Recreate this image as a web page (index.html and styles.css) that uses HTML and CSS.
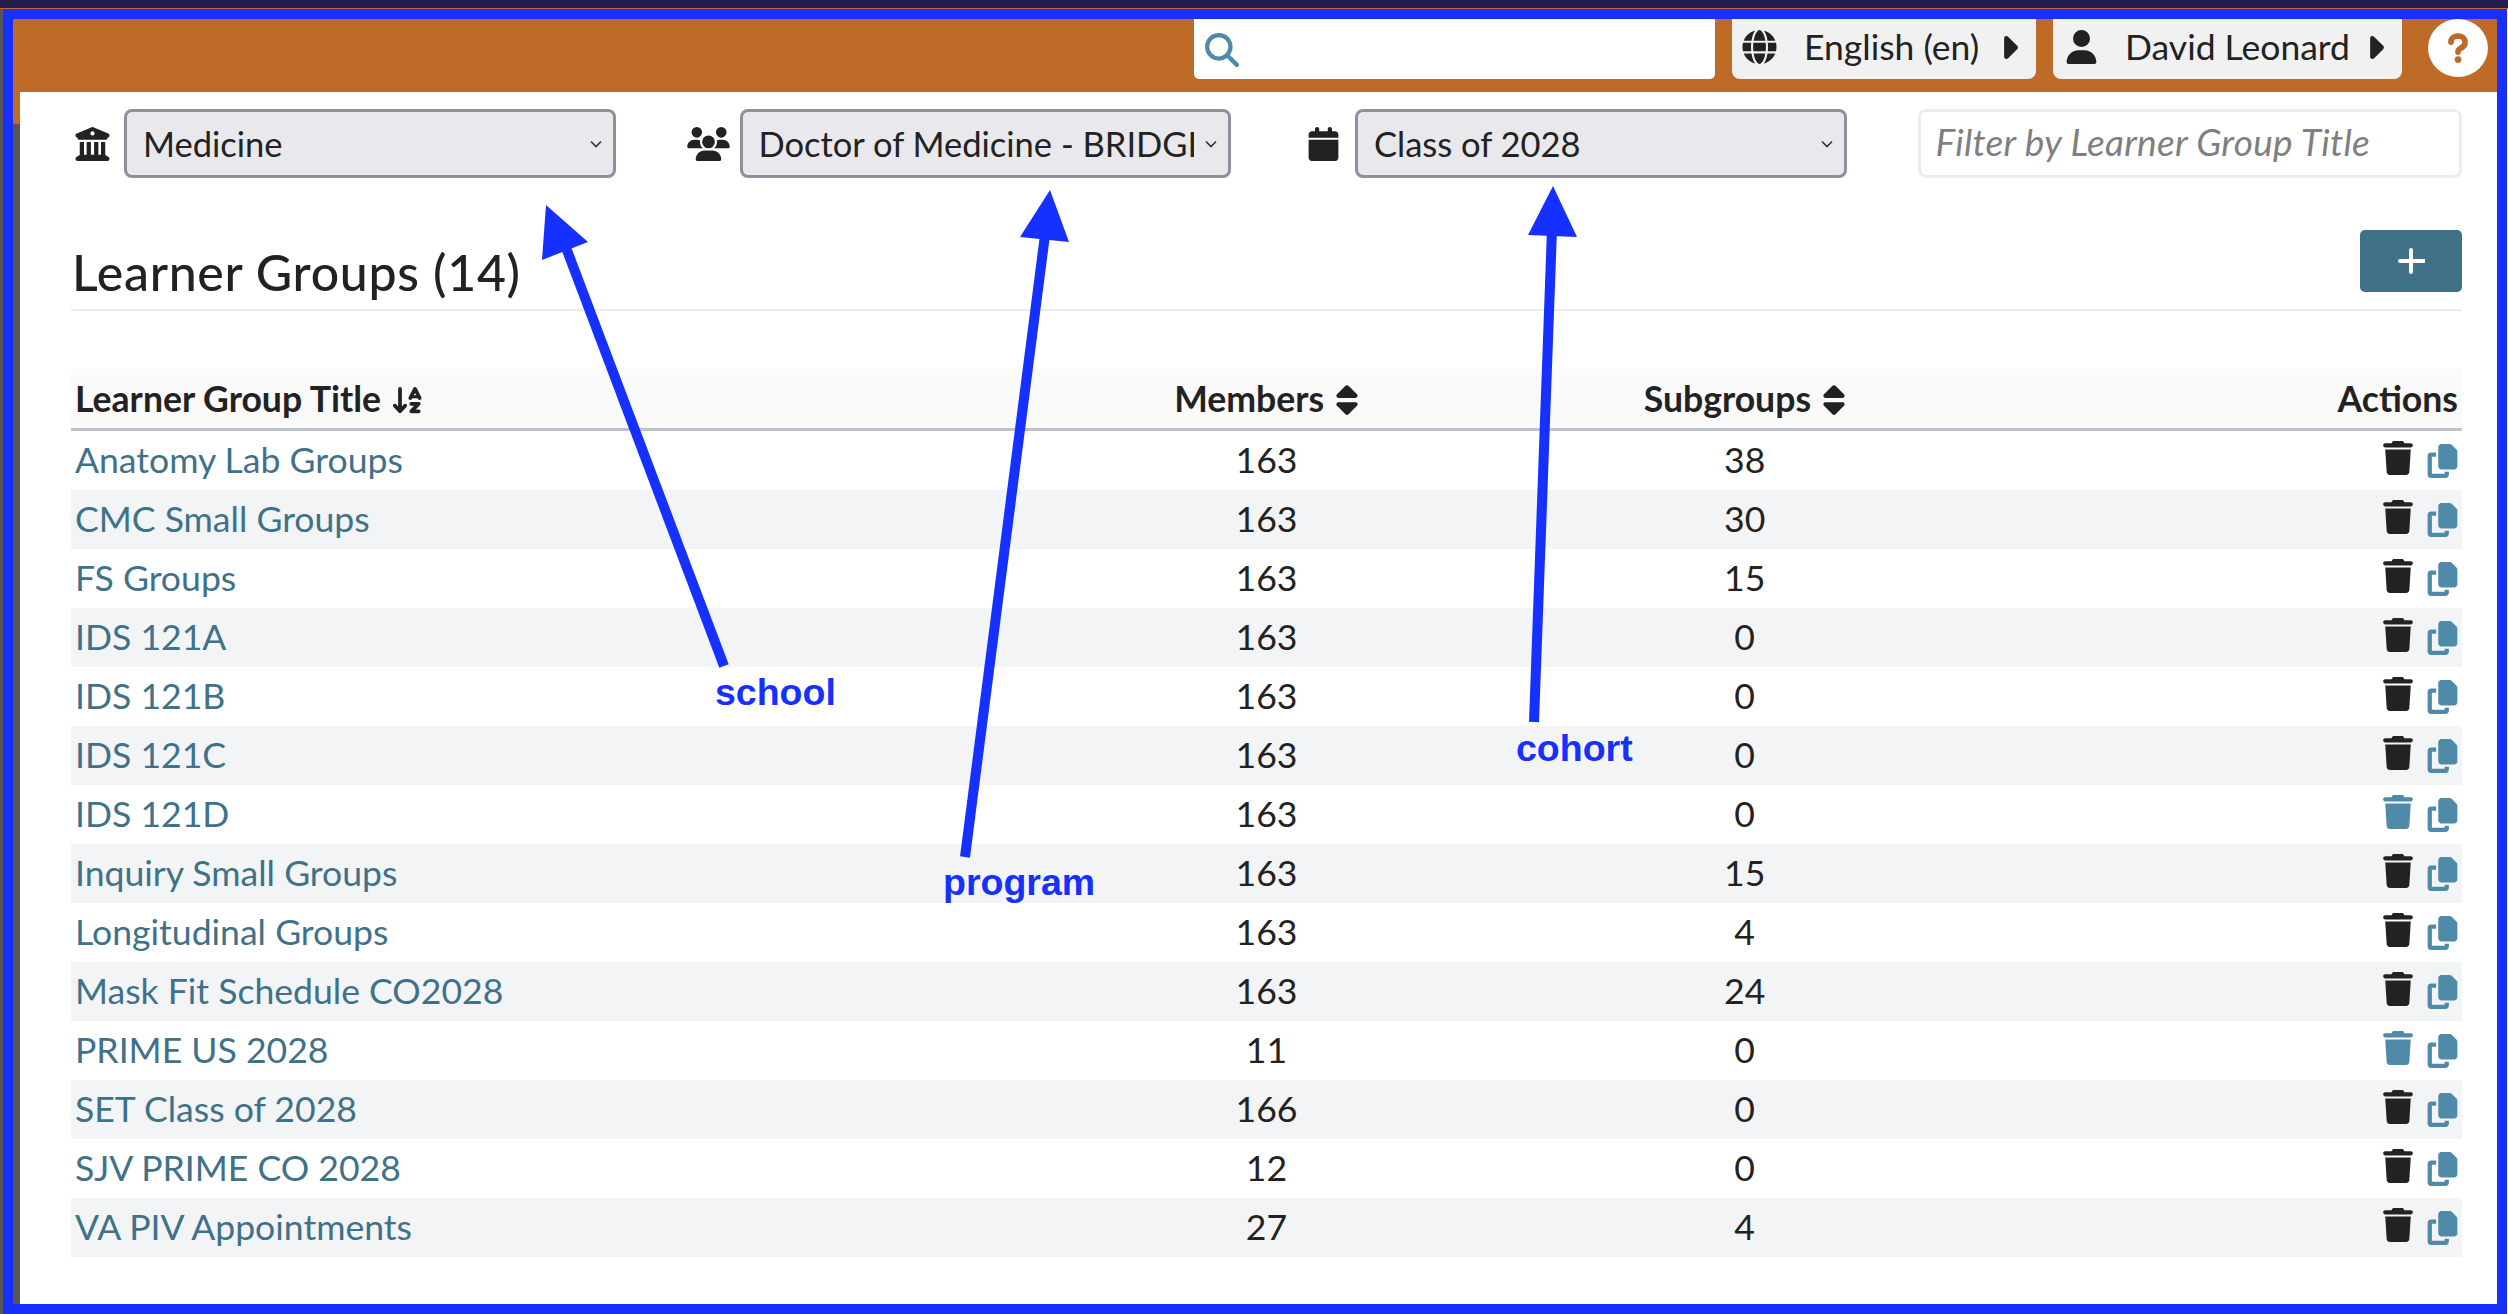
FILE: index.html
```html
<!DOCTYPE html>
<html lang="en">
<head>
<meta charset="utf-8">
<title>Learner Groups</title>
<link rel="stylesheet" href="styles.css">
</head>
<body>
<svg class="sprite" aria-hidden="true">
  <symbol id="i-bank" viewBox="0 0 512 512"><path d="M243.4 2.6l-224 96c-14 6-21.8 21-18.7 35.8S16.8 160 32 160v8c0 13.3 10.7 24 24 24H456c13.3 0 24-10.7 24-24v-8c15.2 0 28.3-10.7 31.3-25.6s-4.8-29.9-18.7-35.8l-224-96c-8-3.4-17.2-3.4-25.2 0zM128 224H64V420.3c-.6 .3-1.2 .7-1.8 1.1l-48 32c-11.7 7.8-17 22.4-12.9 35.9S17.9 512 32 512H480c14.1 0 26.5-9.2 30.6-22.7s-1.1-28.1-12.9-35.9l-48-32c-.6-.4-1.2-.7-1.8-1.1V224H384V416H344V224H280V416H232V224H168V416H128V224zM256 64a32 32 0 1 1 0 64 32 32 0 1 1 0-64z"/></symbol>
  <symbol id="i-users" viewBox="0 0 640 512"><path d="M144 0a80 80 0 1 1 0 160A80 80 0 1 1 144 0zM512 0a80 80 0 1 1 0 160A80 80 0 1 1 512 0zM0 298.700C0 239.800 47.800 192 106.700 192h42.700c15.900 0 31 3.500 44.600 9.700c-1.300 7.200-1.900 14.700-1.900 22.300c0 38.200 16.800 72.500 43.300 96c-.2 0-.4 0-.7 0H21.300C9.600 320 0 310.400 0 298.700zM405.300 320c-.2 0-.4 0-.7 0c26.600-23.500 43.300-57.800 43.300-96c0-7.600-.7-15-1.900-22.300c13.600-6.300 28.700-9.700 44.600-9.700h42.700C592.200 192 640 239.800 640 298.700c0 11.800-9.600 21.300-21.300 21.300H405.300zM224 224a96 96 0 1 1 192 0 96 96 0 1 1 -192 0zM128 485.300C128 411.700 187.700 352 261.300 352H378.700C452.300 352 512 411.700 512 485.300c0 14.700-11.900 26.700-26.700 26.700H154.700c-14.700 0-26.700-11.900-26.700-26.700z"/></symbol>
  <symbol id="i-cal" viewBox="0 0 448 512"><path d="M96 32V64H48C21.500 64 0 85.500 0 112v48H448V112c0-26.500-21.500-48-48-48H352V32c0-17.700-14.300-32-32-32s-32 14.300-32 32V64H160V32c0-17.700-14.300-32-32-32S96 14.300 96 32zM448 192H0V464c0 26.500 21.500 48 48 48H400c26.500 0 48-21.500 48-48V192z"/></symbol>
  <symbol id="i-globe" viewBox="0 0 512 512"><path d="M352 256c0 22.200-1.200 43.600-3.300 64H163.300c-2.200-20.400-3.300-41.800-3.300-64s1.200-43.600 3.300-64H348.700c2.200 20.400 3.300 41.800 3.300 64zm28.800-64H503.900c5.300 20.500 8.100 41.900 8.100 64s-2.800 43.500-8.100 64H380.800c2.100-20.600 3.200-42 3.200-64s-1.100-43.400-3.200-64zm112.600-32H376.700c-10-63.900-29.800-117.400-55.300-151.600c78.300 20.700 142 77.500 171.900 151.600zm-149.100 0H167.700c6.100-36.400 15.500-68.600 27-94.700c10.500-23.600 22.200-40.700 33.500-51.500C239.400 3.200 248.700 0 256 0s16.600 3.200 27.800 13.800c11.300 10.800 23 27.900 33.500 51.500c11.600 26 20.900 58.200 27 94.700zm-209 0H18.600C48.600 85.900 112.200 29.100 190.600 8.400C165.100 42.600 145.300 96.100 135.300 160zM8.100 192H131.200c-2.100 20.600-3.200 42-3.200 64s1.100 43.400 3.200 64H8.100C2.800 299.500 0 278.100 0 256s2.800-43.500 8.100-64zM194.700 446.600c-11.600-26-20.900-58.200-27-94.600H344.300c-6.100 36.400-15.500 68.600-27 94.600c-10.500 23.600-22.200 40.700-33.500 51.500C272.600 508.800 263.300 512 256 512s-16.600-3.200-27.800-13.800c-11.300-10.800-23-27.900-33.500-51.500zM135.300 352c10 63.900 29.800 117.400 55.300 151.600C112.200 482.900 48.600 426.100 18.600 352H135.300zm358.100 0c-30 74.100-93.600 130.900-171.900 151.600c25.500-34.200 45.200-87.700 55.300-151.600H493.400z"/></symbol>
  <symbol id="i-user" viewBox="0 0 448 512"><path d="M224 256A128 128 0 1 0 224 0a128 128 0 1 0 0 256zm-45.700 48C79.800 304 0 383.800 0 482.300C0 498.700 13.300 512 29.700 512H418.300c16.400 0 29.700-13.300 29.700-29.700C448 383.800 368.200 304 269.700 304H178.300z"/></symbol>
  <symbol id="i-caret" viewBox="64 96 192 320"><path d="M246.600 278.600c12.500-12.500 12.500-32.800 0-45.300l-128-128c-9.200-9.200-22.900-11.900-34.900-6.900s-19.300 16.600-19.300 29.600l0 256c0 12.900 7.800 24.600 19.800 29.600s25.700 2.200 34.900-6.900l128-128z"/></symbol>
  <symbol id="i-question" viewBox="0 0 320 512"><path d="M80 160c0-35.300 28.700-64 64-64h32c35.300 0 64 28.700 64 64v3.600c0 21.800-11.100 42.100-29.400 53.800l-42.200 27.100c-25.200 16.200-40.400 44.100-40.400 74V320c0 17.700 14.300 32 32 32s32-14.300 32-32v-1.400c0-8.200 4.200-15.800 11-20.200l42.200-27.100c36.600-23.600 58.800-64.100 58.800-107.700V160c0-70.700-57.300-128-128-128H144C73.300 32 16 89.300 16 160c0 17.700 14.300 32 32 32s32-14.300 32-32zm80 320a40 40 0 1 0 0-80 40 40 0 1 0 0 80z"/></symbol>
  <symbol id="i-search" viewBox="0 0 512 512"><path d="M416 208c0 45.900-14.900 88.300-40 122.700L502.600 457.400c12.500 12.500 12.500 32.800 0 45.300s-32.800 12.500-45.300 0L330.700 376c-34.400 25.200-76.800 40-122.700 40C93.100 416 0 322.900 0 208S93.100 0 208 0S416 93.100 416 208zM208 352a144 144 0 1 0 0-288 144 144 0 1 0 0 288z"/></symbol>
  <symbol id="i-plus" viewBox="0 0 448 512"><path d="M256 80c0-17.700-14.300-32-32-32s-32 14.300-32 32V224H48c-17.700 0-32 14.300-32 32s14.300 32 32 32H192V432c0 17.700 14.300 32 32 32s32-14.300 32-32V288H432c17.700 0 32-14.300 32-32s-14.300-32-32-32H256V80z"/></symbol>
  <symbol id="i-sort" viewBox="0 0 320 512"><path d="M137.400 41.400c12.500-12.500 32.800-12.500 45.300 0l128 128c9.200 9.200 11.900 22.900 6.900 34.900s-16.600 19.800-29.600 19.800H32c-12.900 0-24.600-7.800-29.600-19.800s-2.200-25.700 6.900-34.900l128-128zm0 429.300l-128-128c-9.200-9.200-11.900-22.900-6.900-34.900s16.600-19.800 29.600-19.800H288c12.900 0 24.600 7.800 29.600 19.800s2.200 25.700-6.900 34.900l-128 128c-12.500 12.500-32.800 12.500-45.300 0z"/></symbol>
  <symbol id="i-az" viewBox="32 0 512 512"><path d="M183.600 469.600C177.500 476.200 169 480 160 480s-17.500-3.800-23.600-10.400l-88-96c-11.900-13-11.100-33.300 2-45.200s33.300-11.100 45.200 2L128 365.700V64c0-17.700 14.300-32 32-32s32 14.300 32 32V365.700l32.400-35.400c11.900-13 32.200-13.900 45.200-2s13.900 32.200 2 45.200l-88 96zM320 320c0-17.700 14.300-32 32-32H480c12.900 0 24.600 7.800 29.600 19.800s2.200 25.700-6.900 34.900L429.300 416H480c17.700 0 32 14.300 32 32s-14.300 32-32 32H352c-12.900 0-24.600-7.800-29.600-19.800s-2.200-25.700 6.900-34.900L402.700 352H352c-17.700 0-32-14.300-32-32zM416 32c12.100 0 23.200 6.800 28.600 17.700l64 128 16 32c7.900 15.800 1.500 35-14.300 42.900s-35 1.500-42.900-14.300L460.200 224H371.800l-7.200 14.300c-7.900 15.800-27.100 22.200-42.900 14.300s-22.200-27.100-14.300-42.900l16-32 64-128C392.800 38.800 403.900 32 416 32zM395.800 176h40.400L416 135.600 395.800 176z"/></symbol>
  <symbol id="i-trash" viewBox="0 0 448 512"><path d="M135.200 17.700L128 32H32C14.300 32 0 46.300 0 64S14.300 96 32 96H416c17.700 0 32-14.300 32-32s-14.300-32-32-32H320l-7.200-14.300C307.400 6.800 296.300 0 284.200 0H163.800c-12.100 0-23.200 6.800-28.600 17.700zM416 128H32L53.200 467c1.600 25.300 22.600 45 47.900 45H346.900c25.300 0 46.300-19.700 47.900-45L416 128z"/></symbol>
  <symbol id="i-copy" viewBox="0 0 448 512"><path d="M208 0H332.100c12.700 0 24.900 5.100 33.900 14.100l67.900 67.900c9 9 14.100 21.200 14.100 33.900V336c0 26.500-21.500 48-48 48H208c-26.500 0-48-21.500-48-48V48c0-26.500 21.500-48 48-48zM48 128h80v64H64V448H256V416h64v48c0 26.500-21.500 48-48 48H48c-26.500 0-48-21.500-48-48V176c0-26.500 21.500-48 48-48z"/></symbol>
</svg>

<div class="band"></div>
<div class="shell">
  <div class="frame">
    <header class="nav">
      <div class="search"><svg class="ico ico-search"><use href="#i-search"/></svg></div>
      <div class="menu menu-lang"><svg class="ico ico-globe"><use href="#i-globe"/></svg><span class="menu-label">English (en)</span><svg class="ico ico-caret"><use href="#i-caret"/></svg></div>
      <div class="menu menu-user"><svg class="ico ico-user"><use href="#i-user"/></svg><span class="menu-label">David Leonard</span><svg class="ico ico-caret"><use href="#i-caret"/></svg></div>
      <div class="help"><svg class="ico ico-question"><use href="#i-question"/></svg></div>
    </header>
    <main class="main">
      <section class="filters">
        <div class="filter"><svg class="ico ico-filter ico-bank"><use href="#i-bank"/></svg><select class="picker"><option>Medicine</option></select></div>
        <div class="filter"><svg class="ico ico-filter ico-users"><use href="#i-users"/></svg><select class="picker"><option>Doctor of Medicine - BRIDGES</option></select></div>
        <div class="filter"><svg class="ico ico-filter ico-cal"><use href="#i-cal"/></svg><select class="picker"><option>Class of 2028</option></select></div>
        <div class="filter"><input class="title-filter" type="text" placeholder="Filter by Learner Group Title"></div>
      </section>
      <section class="heading">
        <h2 class="title">Learner Groups (14)</h2>
        <button class="add" type="button"><svg class="ico ico-plus"><use href="#i-plus"/></svg></button>
      </section>
      <table class="groups">
        <colgroup><col class="c-title"><col class="c-num"><col class="c-num"><col class="c-num"></colgroup>
        <thead>
          <tr>
            <th class="left">Learner Group Title <svg class="ico ico-az"><use href="#i-az"/></svg></th>
            <th class="mid">Members <svg class="ico ico-sort"><use href="#i-sort"/></svg></th>
            <th class="mid">Subgroups <svg class="ico ico-sort"><use href="#i-sort"/></svg></th>
            <th class="right">Actions</th>
          </tr>
        </thead>
        <tbody>
          <tr><td class="left"><a href="#">Anatomy Lab Groups</a></td><td class="mid">163</td><td class="mid">38</td><td class="right"><svg class="ico ico-trash"><use href="#i-trash"/></svg><svg class="ico ico-copy"><use href="#i-copy"/></svg></td></tr>
          <tr><td class="left"><a href="#">CMC Small Groups</a></td><td class="mid">163</td><td class="mid">30</td><td class="right"><svg class="ico ico-trash"><use href="#i-trash"/></svg><svg class="ico ico-copy"><use href="#i-copy"/></svg></td></tr>
          <tr><td class="left"><a href="#">FS Groups</a></td><td class="mid">163</td><td class="mid">15</td><td class="right"><svg class="ico ico-trash"><use href="#i-trash"/></svg><svg class="ico ico-copy"><use href="#i-copy"/></svg></td></tr>
          <tr><td class="left"><a href="#">IDS 121A</a></td><td class="mid">163</td><td class="mid">0</td><td class="right"><svg class="ico ico-trash"><use href="#i-trash"/></svg><svg class="ico ico-copy"><use href="#i-copy"/></svg></td></tr>
          <tr><td class="left"><a href="#">IDS 121B</a></td><td class="mid">163</td><td class="mid">0</td><td class="right"><svg class="ico ico-trash"><use href="#i-trash"/></svg><svg class="ico ico-copy"><use href="#i-copy"/></svg></td></tr>
          <tr><td class="left"><a href="#">IDS 121C</a></td><td class="mid">163</td><td class="mid">0</td><td class="right"><svg class="ico ico-trash"><use href="#i-trash"/></svg><svg class="ico ico-copy"><use href="#i-copy"/></svg></td></tr>
          <tr><td class="left"><a href="#">IDS 121D</a></td><td class="mid">163</td><td class="mid">0</td><td class="right"><svg class="ico ico-trash is-active"><use href="#i-trash"/></svg><svg class="ico ico-copy"><use href="#i-copy"/></svg></td></tr>
          <tr><td class="left"><a href="#">Inquiry Small Groups</a></td><td class="mid">163</td><td class="mid">15</td><td class="right"><svg class="ico ico-trash"><use href="#i-trash"/></svg><svg class="ico ico-copy"><use href="#i-copy"/></svg></td></tr>
          <tr><td class="left"><a href="#">Longitudinal Groups</a></td><td class="mid">163</td><td class="mid">4</td><td class="right"><svg class="ico ico-trash"><use href="#i-trash"/></svg><svg class="ico ico-copy"><use href="#i-copy"/></svg></td></tr>
          <tr><td class="left"><a href="#">Mask Fit Schedule CO2028</a></td><td class="mid">163</td><td class="mid">24</td><td class="right"><svg class="ico ico-trash"><use href="#i-trash"/></svg><svg class="ico ico-copy"><use href="#i-copy"/></svg></td></tr>
          <tr><td class="left"><a href="#">PRIME US 2028</a></td><td class="mid">11</td><td class="mid">0</td><td class="right"><svg class="ico ico-trash is-active"><use href="#i-trash"/></svg><svg class="ico ico-copy"><use href="#i-copy"/></svg></td></tr>
          <tr><td class="left"><a href="#">SET Class of 2028</a></td><td class="mid">166</td><td class="mid">0</td><td class="right"><svg class="ico ico-trash"><use href="#i-trash"/></svg><svg class="ico ico-copy"><use href="#i-copy"/></svg></td></tr>
          <tr><td class="left"><a href="#">SJV PRIME CO 2028</a></td><td class="mid">12</td><td class="mid">0</td><td class="right"><svg class="ico ico-trash"><use href="#i-trash"/></svg><svg class="ico ico-copy"><use href="#i-copy"/></svg></td></tr>
          <tr><td class="left"><a href="#">VA PIV Appointments</a></td><td class="mid">27</td><td class="mid">4</td><td class="right"><svg class="ico ico-trash"><use href="#i-trash"/></svg><svg class="ico ico-copy"><use href="#i-copy"/></svg></td></tr>
        </tbody>
      </table>
    </main>
  </div>
</div>

<svg class="arrows" viewBox="0 0 2508 1314" aria-hidden="true">
  <line class="shaft" x1="724" y1="666" x2="565" y2="245"/>
  <polygon class="head" points="546,205 588,242 542,260"/>
  <line class="shaft" x1="965" y1="857" x2="1045" y2="235"/>
  <polygon class="head" points="1050,190 1069,242 1020,237"/>
  <line class="shaft" x1="1534" y1="722" x2="1552" y2="230"/>
  <polygon class="head" points="1553,186 1577,237 1528,235"/>
</svg>
<span class="note note-school">school</span>
<span class="note note-program">program</span>
<span class="note note-cohort">cohort</span>
</body>
</html>
```

FILE: styles.css
```css
* { box-sizing: border-box; }

html, body { margin: 0; padding: 0; }

body {
  position: relative;
  width: 2508px;
  height: 1314px;
  overflow: hidden;
  background: #fff;
  color: #222;
  font-family: Lato, "Open Sans", sans-serif;
  font-size: 35.6px;
}

.sprite { display: none; }

.band {
  height: 9px;
  background: #251d4f;
  border-bottom: 1px solid #bd6b27;
}

.shell {
  width: 2507px;
  height: 1305px;
  border-left: 3px solid #555;
  background: #fff;
}

.frame {
  height: 100%;
  border: 10px solid #1530ff;
  background: linear-gradient(#bd6b27 105px, #555 105px);
  display: flex;
  flex-direction: column;
}

.ico { display: block; fill: currentColor; flex: none; }

/* top bar */
.nav {
  height: 73px;
  flex: none;
  background: #bd6b27;
  display: flex;
  justify-content: flex-end;
  align-items: flex-start;
  padding-right: 9px;
}

.search {
  width: 521px;
  height: 60px;
  background: #fff;
  border-radius: 0 0 5px 5px;
  margin-right: 17px;
  padding: 14px 0 0 10px;
  color: #4f8aa8;
}

.ico-search { width: 36px; height: 34px; }

.menu {
  height: 60px;
  background: #f1f1f1;
  border-radius: 0 0 8px 8px;
  display: flex;
  align-items: center;
  color: #222;
  font-size: 35.5px;
  padding-bottom: 4px;
}

.menu-lang { width: 304px; padding-left: 10px; margin-right: 17px; }
.menu-user { width: 349px; padding-left: 13px; margin-right: 26px; }

.ico-globe { width: 35px; height: 34px; margin-right: 27px; }
.ico-user { width: 31px; height: 34px; margin-right: 28px; }
.menu-label { white-space: nowrap; flex: 1; margin-bottom: 2px; }
.ico-caret { width: 14px; height: 23px; margin-right: 18px; }

.help {
  width: 60px;
  height: 58px;
  background: #fff;
  border-radius: 50%;
  color: #bd6b27;
  display: flex;
  align-items: center;
  justify-content: center;
}

.ico-question { width: 20px; height: 32px; stroke: currentColor; stroke-width: 28px; overflow: visible; }

/* main */
.main {
  flex: 1;
  margin-left: 7px;
  background: #fff;
  padding: 17px 35px 0 51px;
}

.filters {
  display: grid;
  grid-template-columns: repeat(4, minmax(0, 1fr));
  gap: 71px;
}

.filter { display: flex; align-items: center; height: 69px; min-width: 0; }

.ico-filter { height: 34px; margin-right: 10px; flex: none; }
.ico-bank { width: 43px; padding: 0 4px; }
.ico-users { width: 43px; }
.ico-cal { width: 43px; padding: 0 6px; }

.picker {
  appearance: none;
  -webkit-appearance: none;
  flex: 1 1 0;
  width: 0;
  min-width: 0;
  height: 69px;
  padding: 0 34px 0 16px;
  border: 3px solid #8f8f9d;
  border-radius: 8px;
  background-color: #e9e9ed;
  background-image: url("data:image/svg+xml,%3Csvg xmlns='http://www.w3.org/2000/svg' width='12' height='8' viewBox='0 0 12 8'%3E%3Cpath d='M1 1.500l5 5 5-5' fill='none' stroke='%23333' stroke-width='1.600'/%3E%3C/svg%3E");
  background-repeat: no-repeat;
  background-position: right 11px center;
  color: #222;
  font-family: inherit;
  font-size: 34.5px;
}

.title-filter {
  width: 100%;
  height: 69px;
  border: 3px solid #e8eeec;
  border-radius: 8px;
  padding: 0 15px 4px;
  background: #fff;
  font-family: inherit;
  font-size: 37px;
  letter-spacing: 0.3px;
  font-style: italic;
  color: #222;
}

.title-filter::placeholder { color: #7f7f7f; opacity: 1; }

.heading {
  height: 81px;
  margin-top: 52px;
  border-bottom: 2px solid #e8eeec;
  display: flex;
  align-items: flex-start;
  justify-content: space-between;
  margin-bottom: 58px;
}

.title {
  margin: 12px 0 0 1px;
  font-size: 50px;
  letter-spacing: 0.7px;
  font-weight: 500;
  line-height: 60px;
}

.add {
  width: 102px;
  height: 62px;
  border: 0;
  border-radius: 5px;
  background: #3f7189;
  color: #fff;
  display: flex;
  align-items: center;
  justify-content: center;
  padding: 0;
}

.ico-plus { width: 28px; height: 32px; }

/* table */
.groups {
  width: 2391px;
  table-layout: fixed;
  border-collapse: separate;
  border-spacing: 0;
}

.c-title { width: 40%; }
.c-num { width: 20%; }

.groups th {
  height: 62px;
  background: #fafafa;
  border-bottom: 3px solid #bcc3cb;
  font-weight: 700;
  font-size: 35.6px;
  padding: 0 4px;
}

.groups th .ico { display: inline-block; vertical-align: -5px; margin-left: 2px; }
.groups th .ico-az { vertical-align: -3px; }

.groups td { height: 59px; padding: 0 4px 3px; }

.groups tbody tr:nth-child(even) td { background: #f3f4f6; }

.left { text-align: left; }
.mid { text-align: center; }
.right { text-align: right; }

.groups a { color: #3f7189; text-decoration: none; }

.ico-az { width: 31px; height: 30px; }
.ico-sort { width: 24px; height: 34px; }

.ico-trash, .ico-copy { display: inline-block; vertical-align: middle; position: relative; }
.ico-trash { width: 30px; height: 34px; color: #222; margin-right: 14px; top: -5px; }
.ico-trash.is-active { color: #4f8aa8; }
.ico-copy { width: 31px; height: 34px; color: #4f8aa8; top: -2px; }

/* annotations drawn over the screenshot */
.arrows {
  position: absolute;
  left: 0;
  top: 0;
  width: 2508px;
  height: 1314px;
  pointer-events: none;
}

.shaft { stroke: #1530ff; stroke-width: 10; }
.head { fill: #1530ff; }

.note {
  position: absolute;
  color: #1530ff;
  font-family: "Liberation Sans", Arial, sans-serif;
  font-weight: 700;
  font-size: 37.5px;
  line-height: 42px;
}

.note-school { left: 715px; top: 671px; }
.note-program { left: 943px; top: 861px; }
.note-cohort { left: 1516px; top: 727px; }
```
